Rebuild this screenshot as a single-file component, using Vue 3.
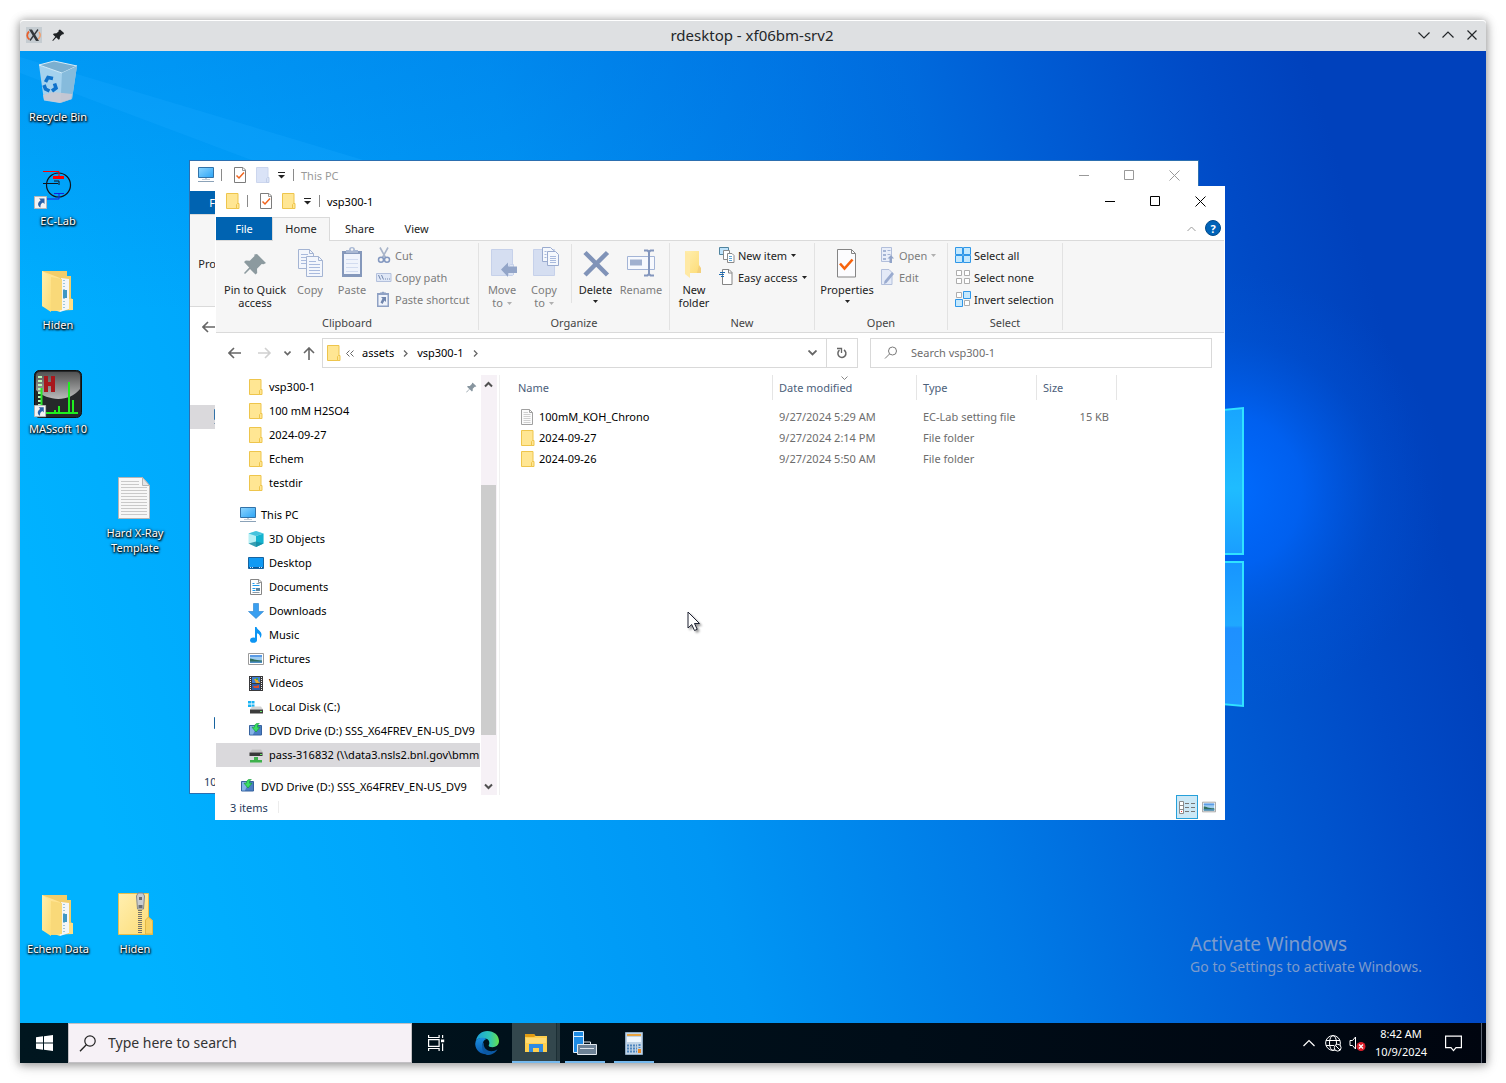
<script setup>
import { ref } from 'vue'

const query = ref('')
const taskQuery = ref('')

const shortcuts = [
  { label: 'Recycle Bin', icon: 'bin', col: 1, row: 1 },
  { label: 'EC-Lab', icon: 'eclab', col: 1, row: 2 },
  { label: 'Hiden', icon: 'folder-open', col: 1, row: 3 },
  { label: 'MASsoft 10', icon: 'massoft', col: 1, row: 4 },
  { label: 'Hard X-Ray Template', icon: 'doc-big', col: 2, row: 5 },
  { label: 'Echem Data', icon: 'folder-open', col: 1, row: 9 },
  { label: 'Hiden', icon: 'folder-zip', col: 2, row: 9 },
]

const groups = [
  {
    name: 'Clipboard', cls: 'g-clip',
    big: [
      { label: 'Pin to Quick access', icon: 'pin', cls: 'w74' },
      { label: 'Copy', icon: 'copy', cls: 'w36', off: true },
      { label: 'Paste', icon: 'paste', cls: 'w48', off: true },
    ],
    small: [
      { label: 'Cut', icon: 'cut', off: true },
      { label: 'Copy path', icon: 'copypath', off: true },
      { label: 'Paste shortcut', icon: 'pasteshort', off: true },
    ],
  },
  {
    name: 'Organize', cls: 'g-org',
    big: [
      { label: 'Move to', icon: 'moveto', cls: 'w42', off: true, inlineArrow: true },
      { label: 'Copy to', icon: 'copyto', cls: 'w42', off: true, inlineArrow: true },
      { label: 'Delete', icon: 'delete', cls: 'w48 split', arrow: true },
      { label: 'Rename', icon: 'rename', cls: 'w44', off: true },
    ],
    small: [],
  },
  {
    name: 'New', cls: 'g-new',
    big: [{ label: 'New folder', icon: 'newfolder', cls: 'w44' }],
    small: [
      { label: 'New item', icon: 'newitem', arrow: true },
      { label: 'Easy access', icon: 'easy', arrow: true },
    ],
  },
  {
    name: 'Open', cls: 'g-open',
    big: [{ label: 'Properties', icon: 'props', cls: 'w60', arrow: true }],
    small: [
      { label: 'Open', icon: 'open', off: true, arrow: true },
      { label: 'Edit', icon: 'edit', off: true },
    ],
  },
  {
    name: 'Select', cls: 'g-sel',
    big: [],
    small: [
      { label: 'Select all', icon: 'selall' },
      { label: 'Select none', icon: 'selnone' },
      { label: 'Invert selection', icon: 'selinv' },
    ],
  },
]

const quick = ['vsp300-1', '100 mM H2SO4', '2024-09-27', 'Echem', 'testdir']

const places = [
  { label: '3D Objects', icon: 'cube' },
  { label: 'Desktop', icon: 'desk' },
  { label: 'Documents', icon: 'docs' },
  { label: 'Downloads', icon: 'down' },
  { label: 'Music', icon: 'music' },
  { label: 'Pictures', icon: 'pics' },
  { label: 'Videos', icon: 'video' },
  { label: 'Local Disk (C:)', icon: 'disk' },
  { label: 'DVD Drive (D:) SSS_X64FREV_EN-US_DV9', icon: 'dvd' },
  { label: 'pass-316832 (\\\\data3.nsls2.bnl.gov\\bmm', icon: 'net', selected: true },
]

const files = [
  { name: '100mM_KOH_Chrono', date: '9/27/2024 5:29 AM', type: 'EC-Lab setting file', size: '15 KB', icon: 'doc' },
  { name: '2024-09-27', date: '9/27/2024 2:14 PM', type: 'File folder', size: '', icon: 'folder' },
  { name: '2024-09-26', date: '9/27/2024 5:50 AM', type: 'File folder', size: '', icon: 'folder' },
]
</script>

<template>
  <svg class="sprite" aria-hidden="true">
    <defs>
      <linearGradient id="gFolder" x1="0" y1="0" x2="1" y2="1">
        <stop offset="0" stop-color="#ffefb0" /><stop offset="1" stop-color="#fddc76" />
      </linearGradient>
      <linearGradient id="gScreen" x1="0" y1="0" x2="1" y2="1">
        <stop offset="0" stop-color="#8fd6ff" /><stop offset="1" stop-color="#2ba4f5" />
      </linearGradient>
      <linearGradient id="gEdge" x1="0" y1="0" x2="1" y2="0">
        <stop offset="0" stop-color="#1aa0dd" /><stop offset=".6" stop-color="#2fc6b4" /><stop offset="1" stop-color="#66e04c" />
      </linearGradient>
      <linearGradient id="gEdge2" x1="0" y1="0" x2="0" y2="1">
        <stop offset="0" stop-color="#1a8fe0" /><stop offset="1" stop-color="#0a58ad" />
      </linearGradient>
      <linearGradient id="gMas" x1="0" y1="0" x2="0" y2="1">
        <stop offset="0" stop-color="#5c5c5c" /><stop offset="1" stop-color="#dedede" />
      </linearGradient>

      <symbol id="folder" viewBox="0 0 16 16">
        <path d="M1.500.5h11.500v15H1.500z" fill="#ffe693" stroke="#eec54c" />
        <path d="M11.500 15.500v-4l1-1h1.500v5z" fill="#ffe693" stroke="#eec54c" />
      </symbol>
      <symbol id="folder-dim" viewBox="0 0 16 16">
        <path d="M1.500.5h11.500v15H1.500z" fill="#dae3f7" stroke="#ccd6ee" />
        <path d="M11.500 15.500v-4l1-1h1.500v5z" fill="#dae3f7" stroke="#c3cfe9" />
      </symbol>
      <symbol id="doc" viewBox="0 0 16 16">
        <path d="M1.500.5h8l3 3v12h-11z" fill="#fbfbfb" stroke="#a0a0a0" />
        <path d="M9.500.5v3h3" fill="none" stroke="#a0a0a0" />
        <path d="M3.500 3.500h4.500M3.500 5.500h7M3.500 7.500h7M3.500 9.500h7M3.500 11.500h7M3.500 13.500h7" stroke="#cfcfcf" />
      </symbol>
      <symbol id="check" viewBox="0 0 16 16">
        <path d="M2.500.5h8.500l2.500 2.500v12.500h-11z" fill="#fff" stroke="#7c7c7c" />
        <path d="M10.500.5v3h3" fill="none" stroke="#9a9a9a" />
        <path d="M4.500 8.500l2.500 2.500 5-5.500" fill="none" stroke="#f0641e" stroke-width="1.500" />
      </symbol>
      <symbol id="pc" viewBox="0 0 16 16">
        <path d="M.5.500h15v10H.5z" fill="url(#gScreen)" stroke="#3272a8" />
        <path d="M7 11h2v1H7z" fill="#c5ced6" /><path d="M4 12.500h8" stroke="#c5ced6" />
        <path d="M0 14.500h16" stroke="#8ba2b8" />
      </symbol>
      <symbol id="cube" viewBox="0 0 16 16">
        <path d="M8 0l7.500 2.500v10L8 16 .5 12.500v-10z" fill="#b7f0f5" />
        <path d="M8 5l7.500-2.500v10L8 16z" fill="#14b3cf" /><path d="M.5 2.500L8 0l7.500 2.500L8 5z" fill="#45c3dd" />
        <path d="M.5 12.500L8 10.500l7.500 2L8 16z" fill="#168aa1" opacity=".8" />
      </symbol>
      <symbol id="desk" viewBox="0 0 16 16">
        <path d="M.5 2.500h15v11H.5z" fill="#0f9af4" stroke="#17639f" />
        <path d="M1 13V12h14v1z" fill="#0c5796" /><path d="M2 12.500h3M11 12.500h3" stroke="#cfe8ff" stroke-dasharray="1 1" />
      </symbol>
      <symbol id="docs" viewBox="0 0 16 16">
        <path d="M2.500.5h8.500l2.500 2.500v12.500h-11z" fill="#fff" stroke="#868686" />
        <path d="M4.500 6.500h7M4.500 4.500h2M4.500 9.500h3M4.500 11.500h3" stroke="#1d9bef" />
        <path d="M8.500 4.500h3M4.500 13.500h7" stroke="#8a9aa8" /><path d="M8 9h4v3H8z" fill="#5d86a0" />
        <path d="M10.500.5v3h3" fill="none" stroke="#999" />
      </symbol>
      <symbol id="down" viewBox="0 0 16 16">
        <path d="M5.500.5h5v8h5L8 15.500.5 8.500h5z" fill="#3a9ff0" stroke="#2380cf" stroke-width=".6" />
      </symbol>
      <symbol id="music" viewBox="0 0 16 16">
        <ellipse cx="5.500" cy="13.200" rx="3.400" ry="2.600" fill="#0d95f3" />
        <path d="M7 13V0h1.500c.7 3 5 4 5 7.500 0 1.500-.5 2.500-1.500 3.500.5-3-1.500-4.500-3-4.800V13z" fill="#0d95f3" />
      </symbol>
      <symbol id="pics" viewBox="0 0 16 16">
        <path d="M.5 2.500h15v11H.5z" fill="#fff" stroke="#9b9b9b" />
        <path d="M2 4h12v8H2z" fill="#9fcdf1" /><path d="M2 4h12v2H2z" fill="#5b9be6" /><path d="M2 7.500c3 0 5 2 12 2V12H2z" fill="#2f6f5e" /><path d="M2 10.500h12V12H2z" fill="#4e8fc4" />
      </symbol>
      <symbol id="video" viewBox="0 0 16 16">
        <path d="M1 1h14v15H1z" fill="#39393b" /><path d="M4 2h8v6H4z" fill="#3f7fd3" /><path d="M4 9h8v6H4z" fill="#2c5dab" />
        <path d="M6 4h4v2l2 2H8z" fill="#e7a92c" /><path d="M5 11h3l3-1v3H6z" fill="#d94f2b" /><path d="M8 3h2v2H8z" fill="#52a33b" />
        <path d="M2.500 2v14M13.500 2v14" stroke="#f0f0f0" stroke-dasharray="1 1" />
      </symbol>
      <symbol id="disk" viewBox="0 0 16 16">
        <path d="M0 2h3v2.500H0zM3.500 2h3v2.500h-3zM0 5.500h3V8H0zM3.500 5.500h3V8h-3z" fill="#18b3f3" />
        <path d="M4 7.500h9l2 3H2z" fill="#d3d3d3" /><path d="M2 10.500h13v4H2z" fill="#3c3c3c" /><path d="M12 12.500h2" stroke="#66ea66" />
      </symbol>
      <symbol id="dvd" viewBox="0 0 16 16">
        <path d="M1.500 2.500h12v9.500h-12z" fill="#4b7ec4" stroke="#37639f" /><path d="M2 3h7l-4 8.500H2z" fill="#86b3e6" />
        <path d="M11.500 0c-4 .3-5 1.800-5 4.200H4L8 9l4-4.800H9.500C9.500 2.200 10 1 11.500 0z" fill="#3adf63" stroke="#159a3a" stroke-width=".7" />
      </symbol>
      <symbol id="net" viewBox="0 0 16 16">
        <path d="M4 2.500h9l2 3H2z" fill="#c3c3c3" /><path d="M1.500 5.500h13v3.500h-13z" fill="#383838" /><path d="M12 7.500h2" stroke="#66ea66" />
        <path d="M6 10h4v3h4v2.500H2V13h4z" fill="#3fb14c" />
      </symbol>
      <symbol id="pin16" viewBox="0 0 16 16">
        <path d="M9.500 2l4.500 4.500-1 .7-1-.2-2.500 2.500v2.500l-1 1-2.800-2.800L2 14l-.5-.5 3.800-3.700L2.500 7l1-1H6l2.700-2.500-.2-1z" fill="#87959f" />
      </symbol>

      <symbol id="pin" viewBox="0 0 32 32">
        <path d="M19 6l9 9-2.500 1.200-1.800-.2-4.700 4.700.2 4.300-1.700 1.500-5.500-5.500L7 26l-1-1 5.200-5.500L6 14l1.800-1.500 4 .3 4.700-4.700-.2-1.600z" transform="translate(-1 1)" fill="#8c9a9f" />
      </symbol>
      <symbol id="copy" viewBox="0 0 32 32">
        <g fill="#f3f6fc" stroke="#a4b4d3"><path d="M4.500 2.500h11l4 4v15h-15z" /><path d="M12.500 9.500h12l4 4v16h-16z" /></g>
        <path d="M15.500 2.500v4h4M24.500 9.500v4h4" fill="none" stroke="#a4b4d3" />
        <path d="M7 7.500h7M7 10.500h5M7 13.500h5M7 16.500h5M15 14.500h7M15 17.500h11M15 20.500h11M15 23.500h11M15 26.500h11" stroke="#a9badd" />
      </symbol>
      <symbol id="paste" viewBox="0 0 32 32">
        <path d="M6 4h20v26H6z" fill="#8598bb" /><path d="M8 7h16v20H8z" fill="#f0f4fc" />
        <path d="M10 6h12V3h-3a3 3 0 0 0-6 0h-3z" fill="#a9b8d3" /><circle cx="16" cy="2.500" r="1.200" fill="#f7f7f7" />
        <path d="M10 12.500h12M10 16.500h12M10 20.500h12M10 24.500h12" stroke="#d2dcf0" />
      </symbol>
      <symbol id="moveto" viewBox="0 0 32 32">
        <path d="M5.500 2.500h21v26h-21z" fill="#d5def1" stroke="#c6d1ea" /><path d="M22.500 28v-9l2-1.500h3V28" fill="#dde5f4" stroke="#c6d1ea" />
        <path d="M15 22.500l7-7v4h9v6.500h-9v4z" fill="#93a5c8" />
      </symbol>
      <symbol id="copyto" viewBox="0 0 32 32">
        <path d="M5.500 2.500h21v26h-21z" fill="#d5def1" stroke="#c6d1ea" />
        <g fill="#f5f8fd" stroke="#9aabcf"><path d="M14.500.5h8l3 3v11h-11z" /><path d="M19.500 4.500h8l3 3v11h-11z" /></g>
        <path d="M22 9.500h6M22 11.500h6M22 13.500h6M22 15.500h6M16.500 4.500h2M16.500 7.500h2M16.500 10.500h2" stroke="#a9badd" />
      </symbol>
      <symbol id="delete" viewBox="0 0 32 32">
        <path d="M5 5.500l22.500 22.500M27.500 5.500l-22.500 22.500" stroke="#8093b8" stroke-width="4.500" fill="none" />
      </symbol>
      <symbol id="rename" viewBox="0 0 32 32">
        <path d="M2.500 9.500h27v13h-27z" fill="#f7f9fe" stroke="#a3b4d6" /><path d="M5 12.500h12v6H5z" fill="#a0b0cf" />
        <path d="M19 3.500h3.500l1.500 1.500 1.500-1.500H29M24 5v22M19 28.500h3.500l1.500-1.500 1.500 1.500H29" stroke="#8396bd" stroke-width="2" fill="none" />
      </symbol>
      <symbol id="newfolder" viewBox="0 0 32 32">
        <path d="M7 4h14v16l2 2v4H10z" fill="url(#gFolder)" /><path d="M7 4l5 4v23l-5-4z" fill="#ffe9a4" /><path d="M21 18l2 3v5h-4z" fill="#f3d07c" />
      </symbol>
      <symbol id="props" viewBox="0 0 32 32">
        <path d="M6.500 2.500h14l4 4v23.500h-18z" fill="#fcfcfe" stroke="#858585" /><path d="M20.500 2.500v4h4" fill="none" stroke="#858585" />
        <path d="M9 16.500l4.500 5 8-9" fill="none" stroke="#f7630c" stroke-width="2.600" />
      </symbol>

      <symbol id="cut" viewBox="0 0 16 16">
        <path d="M4 .5l5.500 10M12 .5L6.500 10.500" stroke="#a8b4c9" stroke-width="1.600" />
        <circle cx="5" cy="12.700" r="2.500" fill="none" stroke="#8398c0" stroke-width="1.500" /><circle cx="11" cy="12.700" r="2.500" fill="none" stroke="#8398c0" stroke-width="1.500" />
      </symbol>
      <symbol id="copypath" viewBox="0 0 16 16">
        <path d="M.5 4.500h14.500v8H.5z" fill="#dfe7f6" stroke="#b3c0dc" /><path d="M2.500 6l2 4.500M5.500 6l2 4.500" stroke="#7186ad" /><path d="M9 10h5" stroke="#7186ad" stroke-dasharray="1 1" />
      </symbol>
      <symbol id="pasteshort" viewBox="0 0 16 16">
        <path d="M1 2h12v14H1z" fill="#8fa1c4" /><path d="M2.500 4h9v10.500h-9z" fill="#eff3fb" /><path d="M4 3h6V1.500H8.500L7 .5 5.500 1.500H4z" fill="#8fa1c4" />
        <path d="M5 6h5v5L8.500 9.500 6.500 13l-2-1.500 2-4z" fill="#7186ad" />
      </symbol>
      <symbol id="newitem" viewBox="0 0 16 16">
        <path d="M.5.500h9v7h-9z" fill="#bfe3fb" stroke="#50849f" /><path d="M4.500 3.500h6v9h-6z" fill="#fff" stroke="#8a8a8a" /><path d="M8.500 6.500h4.500l2 2v7H8.500z" fill="#fff" stroke="#8a8a8a" />
        <path d="M10 9.500h3M10 11.500h3M10 13.500h3" stroke="#5fa7d9" />
      </symbol>
      <symbol id="easy" viewBox="0 0 16 16">
        <path d="M3.500.5h6.500l3 3v12H3.500z" fill="#fff" stroke="#858585" /><path d="M9.500.5v3.500H13" fill="none" stroke="#858585" />
        <path d="M1 3.500h5M0 5.500h5M2 7.500h3" stroke="#1f6db3" />
      </symbol>
      <symbol id="open" viewBox="0 0 16 16">
        <path d="M1.500.5h10v14h-10z" fill="#e9eef9" stroke="#b2bfdb" /><path d="M3 3h3v2H3zM3 7h3v2H3zM3 11h3v2H3z" fill="#a5b5d5" /><path d="M7.500 3.500h3M7.500 7.500h3" stroke="#a5b5d5" />
        <path d="M11 8l3 3.500h-2V16h-2.500v-4.500h-2z" fill="#92a4c8" />
      </symbol>
      <symbol id="edit" viewBox="0 0 16 16">
        <path d="M1.500.5h7.500l3 3v12H1.500z" fill="#e4eaf7" stroke="#b2bfdb" /><path d="M12 3l2 2-7.500 9-2.500 1 .5-3z" fill="#9aabcf" />
      </symbol>
      <symbol id="selall" viewBox="0 0 16 16">
        <path d="M1 1h14v14H1z" fill="#c4e8fd" /><path d="M.5.500h7v7h-7zM8.500.5h7v7h-7zM.5 8.500h7v7h-7zM8.500 8.500h7v7h-7z" fill="none" stroke="#2f97e8" />
      </symbol>
      <symbol id="selnone" viewBox="0 0 16 16">
        <path d="M1.500 1.500h5v5h-5zM9.500 1.500h5v5h-5zM1.500 9.500h5v5h-5zM9.500 9.500h5v5h-5z" fill="#fff" stroke="#adadad" />
      </symbol>
      <symbol id="selinv" viewBox="0 0 16 16">
        <path d="M1.500 1.500h5v5h-5zM9.500 9.500h5v5h-5z" fill="#fff" stroke="#adadad" /><path d="M8.500.5h7v7h-7zM.5 8.500h7v7h-7z" fill="#c4e8fd" stroke="#2f97e8" />
      </symbol>

      <symbol id="shortcut" viewBox="0 0 14 14">
        <path d="M.5.500h12v12H.5z" fill="#f4f4f4" stroke="#b8b8b8" /><path d="M5 2.500h5.500V8L9 6.500C6.500 8 6.500 9 6.500 11.500c-3-1.500-3.500-5 .2-7.300z" fill="#2a62a8" />
      </symbol>
      <symbol id="bin" viewBox="0 0 48 48">
        <path d="M5 7l5 35.500L26 45l12-4 5-33-15 7z" fill="#a5d2ee" />
        <path d="M5 7L20 3l23 5-15 7z" fill="#7bafd0" stroke="#d6ecf8" /><path d="M28 15l15-7-5 33-11.500 4z" fill="#86bbdc" />
        <path d="M9 37l10-3 19 2-.7 5L26 44.700 10 42z" fill="#cbc9d2" opacity=".9" />
        <g fill="none" stroke="#0f72cb" stroke-width="3.600"><path d="M11.500 24l2.500-4.500 5 1" /><path d="M20.500 25.500l1.500 4.500-4 3" /><path d="M15.500 33l-4-2-1.500-4" /></g>
      </symbol>
      <symbol id="eclab" viewBox="0 0 48 48">
        <circle cx="24.500" cy="23" r="12" fill="none" stroke="#10141c" stroke-width="1.200" />
        <path d="M9 9.500h16v5" stroke="#f00" fill="none" /><path d="M19 14h11v3H19z" fill="#f00" />
        <path d="M9 21.500h15M20 19h5v4" stroke="#10141c" fill="none" /><path d="M20 31.500h10M25 31.500v5.500H13" stroke="#1523e0" fill="none" />
        <use href="#shortcut" x="0" y="34" width="14" height="14" />
      </symbol>
      <symbol id="folder-open" viewBox="0 0 48 48">
        <path d="M8 5h25v5h4v22l2 2v10l-20 1L8 40z" fill="#f2cd69" /><path d="M27 12l8 1v30l-9 3z" fill="#f3f6f8" />
        <path d="M30 14v30" stroke="#9fc6da" stroke-width="2" stroke-dasharray="1 2" /><path d="M29 24h4v8h-4z" fill="#3f97c3" />
        <path d="M8 5l18 7v34l-9-3-9-5z" fill="#ffe391" /><path d="M8 5l9 6v35l-9-6z" fill="url(#gFolder)" /><path d="M17 11l11 2v31l-11 1z" fill="#f9d979" /><path d="M35 33h4v11h-4z" fill="#ffdf84" />
      </symbol>
      <symbol id="folder-zip" viewBox="0 0 48 48">
        <path d="M7.500 3.500h30v24l4 3v14H7.500z" fill="url(#gFolder)" stroke="#e6bd4e" /><path d="M34.500 44V30l3-3 4 4v13z" fill="#f7d266" stroke="#e3b845" />
        <path d="M29 18v26" stroke="#74726c" stroke-width="4" stroke-dasharray="1 1" /><path d="M27 3h5l1.500 3-1 13h-6l-1-13z" fill="#c9ccd0" stroke="#85888c" /><path d="M28 7h3v3h-3zM27.500 15h4v3h-4z" fill="#6b6e72" />
      </symbol>
      <symbol id="doc-big" viewBox="0 0 48 48">
        <path d="M7.500 3.500h24l7 8v33h-31z" fill="#f7f7f7" stroke="#b5b5b5" /><path d="M31.500 3.500v8h7z" fill="#e4e4e4" stroke="#b5b5b5" />
        <path d="M10 7.500h18M10 10.500h18M10 13.500h26M10 16.500h26M10 19.500h26M10 22.500h26M10 25.500h26M10 28.500h26M10 31.500h26M10 34.500h26M10 37.500h26M10 40.500h26" stroke="#c9c9c9" />
      </symbol>
      <symbol id="massoft" viewBox="0 0 48 48">
        <rect x=".5" y=".5" width="47" height="47" rx="5" fill="#26282a" stroke="#101010" />
        <path d="M2 6a4 4 0 0 1 4-4h36a4 4 0 0 1 4 4v13C36 32 14 32 2 20z" fill="url(#gMas)" opacity=".8" />
        <path d="M10 6h4v6h3V6h4v16h-4v-6h-3v6h-4z" fill="#a8171c" />
        <path d="M6 6v30" stroke="#b6f7b6" stroke-width="4" stroke-dasharray="2 2" /><path d="M7.500 18v18" stroke="#2ae62a" stroke-width="2" />
        <path d="M12 43h32M21 43v-3M25 43v-7M35 43V12M39 43V30" stroke="#1fee1f" stroke-width="2" fill="none" />
        <use href="#shortcut" x="0" y="35" width="13" height="13" />
      </symbol>
    </defs>
  </svg>

  <div class="page">
    <section class="frame">
      <header class="frame-bar">
        <div class="frame-left">
          <svg width="16" height="16" viewBox="0 0 16 16">
            <path d="M0 0h16v16H0z" fill="#c5ccd1" /><path d="M3 4.500C.5 7 .5 10.500 3.500 12.500" fill="none" stroke="#e8602c" stroke-width="1.800" /><path d="M13 5c2 2.500 1.500 5.500-1 7" fill="none" stroke="#f0a070" stroke-width="1.500" />
            <path d="M3 2.500h3l7 11.500h-3z" fill="#33373b" /><path d="M12 2.500L4 13.500" stroke="#33373b" stroke-width="1.300" />
          </svg>
          <svg width="16" height="16" viewBox="0 0 16 16">
            <path d="M10 2.500l4 3.500-.5 1.200-1.500.2-2 2.100-.3 2.500-1 .8-2.400-2.300L3 14l-.7-.6 3-3.600L3 7.500l.8-1.100 2.700-.2L8.600 4.500V3.200z" fill="#1e2124" />
          </svg>
        </div>
        <h1>rdesktop - xf06bm-srv2</h1>
        <div class="frame-btns">
          <button aria-label="Minimize"><svg width="12" height="12" viewBox="0 0 12 12"><path d="M.5 3.500L6 9l5.500-5.500" /></svg></button>
          <button aria-label="Maximize"><svg width="12" height="12" viewBox="0 0 12 12"><path d="M.5 8.500L6 3l5.500 5.500" /></svg></button>
          <button aria-label="Close"><svg width="12" height="12" viewBox="0 0 12 12"><path d="M1.500 1.500l9 9M10.500 1.500l-9 9" /></svg></button>
        </div>
      </header>

      <main class="desktop">
        <svg class="wall" viewBox="0 0 1466 972" preserveAspectRatio="xMidYMid slice" aria-hidden="true">
          <defs>
            <linearGradient id="wBase" gradientUnits="userSpaceOnUse" x1="60" y1="700" x2="1380" y2="330">
              <stop offset="0" stop-color="#00b2ff" /><stop offset=".2" stop-color="#00a6fc" /><stop offset=".42" stop-color="#0096f4" />
              <stop offset=".62" stop-color="#007ae6" /><stop offset=".8" stop-color="#005cd4" /><stop offset=".92" stop-color="#004ac6" /><stop offset="1" stop-color="#0041bc" />
            </linearGradient>
            <radialGradient id="wGlow" gradientUnits="userSpaceOnUse" cx="1205" cy="440" r="220">
              <stop offset="0" stop-color="#006cff" /><stop offset=".35" stop-color="#0066fc" stop-opacity=".75" /><stop offset=".7" stop-color="#005ce8" stop-opacity=".2" /><stop offset="1" stop-color="#0058e0" stop-opacity="0" />
            </radialGradient>
            <linearGradient id="wTop" x1="0" y1="0" x2="0" y2="1">
              <stop offset="0" stop-color="#006ee0" stop-opacity=".3" /><stop offset="1" stop-color="#006ee0" stop-opacity="0" />
            </linearGradient>
            <linearGradient id="wPane" x1="0" y1="0" x2="0" y2="1">
              <stop offset="0" stop-color="#18a5ff" /><stop offset=".55" stop-color="#1fbcff" /><stop offset="1" stop-color="#1a9eff" />
            </linearGradient>
            <linearGradient id="wPane2" x1="0" y1="0" x2="0" y2="1">
              <stop offset="0" stop-color="#1795ff" /><stop offset=".44" stop-color="#1fa8ff" /><stop offset=".46" stop-color="#1e90ff" /><stop offset="1" stop-color="#2098ff" />
            </linearGradient>
          </defs>
          <path d="M0 0h1466v972H0z" fill="url(#wBase)" />
          <path d="M0 0h900v260H0z" fill="url(#wTop)" />
          <path d="M0 6L480 150H340L0 22z" fill="#18a8ff" opacity=".3" />
          <circle cx="1205" cy="440" r="220" fill="url(#wGlow)" />
          <g stroke="#30e2ff" stroke-width="2">
            <path d="M1090 370l133-13v146h-133z" fill="url(#wPane)" /><path d="M1090 511h133v144l-133-12z" fill="url(#wPane2)" />
          </g>
        </svg>

        <nav class="shortcuts" aria-label="Desktop">
          <a v-for="s in shortcuts" :key="s.label + s.row" href="#" :style="{ gridColumn: s.col, gridRow: s.row }">
            <svg width="48" height="48"><use :href="'#' + s.icon" /></svg>
            <span>{{ s.label }}</span>
          </a>
        </nav>

        <div class="watermark"><p>Activate Windows</p><p>Go to Settings to activate Windows.</p></div>

        <section class="win back">
          <header class="titlebar">
            <svg class="i16 lead" width="16" height="16"><use href="#pc" /></svg><i class="bar"></i>
            <svg class="i16 g1" width="16" height="16"><use href="#check" /></svg>
            <svg class="i16 g2" width="16" height="16"><use href="#folder-dim" /></svg>
            <svg class="qa" width="7" height="8" viewBox="0 0 7 8"><path d="M0 1.500h7" stroke="#222" /><path d="M0 4h7L3.500 7.500z" fill="#222" /></svg>
            <i class="bar"></i><h2>This PC</h2>
            <div class="winbtns">
              <button aria-label="Minimize"><svg width="11" height="11" viewBox="0 0 11 11"><path d="M0 5.500h10" /></svg></button>
              <button aria-label="Maximize"><svg width="11" height="11" viewBox="0 0 11 11"><path d="M.5.500h9v9h-9z" /></svg></button>
              <button aria-label="Close"><svg width="11" height="11" viewBox="0 0 11 11"><path d="M.5.500l10 10M10.500.5l-10 10" /></svg></button>
            </div>
          </header>
          <div class="tabs"><button class="file">File</button></div>
          <div class="ribbon">
            <div class="group g-back"><div class="gbody">
              <button class="big w60"><svg width="32" height="32"><use href="#props" /></svg><span>Properties</span></button>
            </div></div>
          </div>
          <div class="addr"><button class="nav" aria-label="Back"><svg width="14" height="12" viewBox="0 0 14 12"><path d="M13.500 6H1M6 1L1 6l5 5" /></svg></button></div>
          <div class="back-body">
            <div class="back-row selected"><svg width="16" height="16"><use href="#pc" /></svg></div>
            <div class="back-row"><svg width="16" height="16"><use href="#desk" /></svg></div>
          </div>
          <footer class="status"><span>10 items</span></footer>
        </section>

        <section class="win front">
          <header class="titlebar">
            <svg class="i16 lead" width="16" height="16"><use href="#folder" /></svg><i class="bar"></i>
            <svg class="i16 g1" width="16" height="16"><use href="#check" /></svg>
            <svg class="i16 g2" width="16" height="16"><use href="#folder" /></svg>
            <svg class="qa" width="7" height="8" viewBox="0 0 7 8"><path d="M0 1.500h7" stroke="#222" /><path d="M0 4h7L3.500 7.500z" fill="#222" /></svg>
            <i class="bar"></i><h2>vsp300-1</h2>
            <div class="winbtns">
              <button aria-label="Minimize"><svg width="11" height="11" viewBox="0 0 11 11"><path d="M0 5.500h10" /></svg></button>
              <button aria-label="Maximize"><svg width="11" height="11" viewBox="0 0 11 11"><path d="M.5.500h9v9h-9z" /></svg></button>
              <button aria-label="Close"><svg width="11" height="11" viewBox="0 0 11 11"><path d="M.5.500l10 10M10.500.5l-10 10" /></svg></button>
            </div>
          </header>

          <div class="tabs">
            <button class="file">File</button><button class="tab on">Home</button><button class="tab">Share</button><button class="tab">View</button>
            <button class="fold" aria-label="Collapse ribbon"><svg width="9" height="6" viewBox="0 0 9 6"><path d="M.5 5L4.500 1l4 4" fill="none" stroke="#9a9a9a" /></svg></button>
            <button class="help" aria-label="Help">?</button>
          </div>

          <div class="ribbon">
            <div v-for="g in groups" :key="g.name" class="group" :class="g.cls">
              <div class="gbody">
                <button v-for="b in g.big" :key="b.label" class="big" :class="[b.cls, { off: b.off }]">
                  <svg width="32" height="32"><use :href="'#' + b.icon" /></svg>
                  <span>{{ b.label }}<svg v-if="b.inlineArrow" class="tri in" width="5" height="3" viewBox="0 0 5 3"><path d="M0 0h5L2.500 3z" /></svg></span>
                  <svg v-if="b.arrow" class="tri under" width="5" height="3" viewBox="0 0 5 3"><path d="M0 0h5L2.500 3z" /></svg>
                </button>
                <div v-if="g.small.length" class="smalls">
                  <button v-for="b in g.small" :key="b.label" class="small" :class="{ off: b.off }">
                    <svg width="16" height="16"><use :href="'#' + b.icon" /></svg><span>{{ b.label }}</span>
                    <svg v-if="b.arrow" class="tri" width="5" height="3" viewBox="0 0 5 3"><path d="M0 0h5L2.500 3z" /></svg>
                  </button>
                </div>
              </div>
              <div class="gname">{{ g.name }}</div>
            </div>
          </div>

          <div class="addr">
            <button class="nav" aria-label="Back"><svg width="14" height="12" viewBox="0 0 14 12"><path d="M13 6H1M6 1L1 6l5 5" /></svg></button>
            <button class="nav dim" aria-label="Forward"><svg width="14" height="12" viewBox="0 0 14 12"><path d="M0 6h12M7 1l5 5-5 5" /></svg></button>
            <button class="nav slim" aria-label="Recent"><svg width="7" height="5" viewBox="0 0 7 5"><path d="M.5.500l3 3 3-3" /></svg></button>
            <button class="nav" aria-label="Up"><svg width="12" height="13" viewBox="0 0 12 13"><path d="M6 13V1M1 6l5-5 5 5" /></svg></button>
            <div class="crumbs">
              <svg width="16" height="16"><use href="#folder" /></svg>
              <svg class="dbl" width="8" height="7" viewBox="0 0 8 7"><path d="M3.500.5l-3 3 3 3M7.500.5l-3 3 3 3" fill="none" stroke="#666" /></svg>
              <a href="#">assets</a>
              <svg width="5" height="7" viewBox="0 0 5 7"><path d="M1 .5l3 3-3 3" fill="none" stroke="#666" stroke-width="1.300" /></svg>
              <a href="#">vsp300-1</a>
              <svg width="5" height="7" viewBox="0 0 5 7"><path d="M1 .5l3 3-3 3" fill="none" stroke="#666" stroke-width="1.300" /></svg>
              <button class="drop" aria-label="History"><svg width="9" height="6" viewBox="0 0 9 6"><path d="M.5.500l4 4 4-4" fill="none" stroke="#666" stroke-width="1.800" /></svg></button>
              <button class="refresh" aria-label="Refresh"><svg width="12" height="12" viewBox="0 0 12 12"><path d="M8 3a4 4 0 1 1-4.500.2" fill="none" stroke="#666" stroke-width="1.500" /><path d="M1 1.500h4.500V6" fill="none" stroke="#666" stroke-width="1.300" /></svg></button>
            </div>
            <label class="search">
              <svg width="14" height="14" viewBox="0 0 14 14"><circle cx="8.500" cy="5" r="4" fill="none" stroke="#7a7a7a" /><path d="M5.500 8L1 12.500" stroke="#7a7a7a" /></svg>
              <input v-model="query" type="text" placeholder="Search vsp300-1" aria-label="Search vsp300-1" />
            </label>
          </div>

          <div class="content">
            <nav class="tree" aria-label="Folders">
              <a v-for="(q, i) in quick" :key="q" href="#" class="sub"><svg width="16" height="16"><use href="#folder" /></svg><span>{{ q }}</span><svg v-if="i === 0" class="pinned" width="13" height="13"><use href="#pin16" /></svg></a>
              <a href="#" class="top"><svg width="16" height="16"><use href="#pc" /></svg><span>This PC</span></a>
              <a v-for="p in places" :key="p.label" href="#" class="sub" :class="{ selected: p.selected }"><svg width="16" height="16"><use :href="'#' + p.icon" /></svg><span>{{ p.label }}</span></a>
              <a href="#" class="top"><svg width="16" height="16"><use href="#dvd" /></svg><span>DVD Drive (D:) SSS_X64FREV_EN-US_DV9</span></a>
            </nav>
            <div class="scroll">
              <button aria-label="Scroll up"><svg width="9" height="7" viewBox="0 0 9 7"><path d="M1 5.500L4.500 2 8 5.500" fill="none" stroke="#505050" stroke-width="2" /></svg></button>
              <div class="track"><div class="thumb"></div></div>
              <button aria-label="Scroll down"><svg width="9" height="7" viewBox="0 0 9 7"><path d="M1 1.500L4.500 5 8 1.500" fill="none" stroke="#505050" stroke-width="2" /></svg></button>
            </div>
            <div class="list">
              <table>
                <colgroup><col class="c1" /><col class="c2" /><col class="c3" /><col class="c4" /></colgroup>
                <thead><tr><th>Name</th><th>Date modified<svg class="sort" width="7" height="4" viewBox="0 0 7 4"><path d="M.5.500l3 3 3-3" fill="none" stroke="#888" /></svg></th><th>Type</th><th>Size</th></tr></thead>
                <tbody>
                  <tr v-for="f in files" :key="f.name">
                    <td><span class="fname"><svg width="16" height="16"><use :href="'#' + f.icon" /></svg>{{ f.name }}</span></td>
                    <td>{{ f.date }}</td><td>{{ f.type }}</td><td class="num">{{ f.size }}</td>
                  </tr>
                </tbody>
              </table>
            </div>
          </div>

          <footer class="status">
            <span>3 items</span><i></i>
            <button class="on" aria-label="Details view"><svg width="16" height="13" viewBox="0 0 16 13"><path d="M.5.500h4v12h-4zM.5 4.500h4M.5 8.500h4" fill="#fff" stroke="#8b8b8b" /><path d="M6 2.500h4M12 2.500h4M6 6.500h4M12 6.500h4M6 10.500h4M12 10.500h4" stroke="#777" /><path d="M2 10h1v1H2z" fill="#e33" /></svg></button>
            <button aria-label="Icons view"><svg width="14" height="14"><use href="#pics" /></svg></button>
          </footer>
        </section>

        <svg class="cursor" width="14" height="22" viewBox="0 0 14 22"><path d="M1 1v16l3.700-3.500L7.500 19.500l2.700-1.200-2.700-5.800h5z" fill="#fff" stroke="#1c2030" /></svg>
      </main>

      <footer class="taskbar">
        <button class="start" aria-label="Start"><svg width="17" height="16" viewBox="0 0 17 16"><path d="M0 2.300L7 1.300v6.200H0zM8 1.200L17 0v7.500H8zM0 8.500h7v6.200L0 13.700zM8 8.500h9V16l-9-1.200z" fill="#fff" /></svg></button>
        <label class="tsearch">
          <svg width="17" height="17" viewBox="0 0 17 17"><circle cx="11" cy="6" r="5.200" fill="none" stroke="#222" stroke-width="1.200" /><path d="M7.300 9.700L1 16.300" stroke="#222" stroke-width="1.300" /></svg>
          <input v-model="taskQuery" type="text" placeholder="Type here to search" aria-label="Type here to search" />
        </label>
        <button class="app view" aria-label="Task view"><svg width="17" height="16" viewBox="0 0 17 16" fill="none" stroke="#fff" stroke-width="1.200"><path d="M.6 0v2.500h10.500V0M.6 16v-2.500h10.500V16M.6 4.600h10.500v6.800H.6zM14.600 0v3M14.600 8.500V16" /><path d="M13 4.500h3.200v2.700H13z" fill="#fff" stroke="none" /></svg></button>
        <button class="app" aria-label="Edge"><svg width="24" height="24" viewBox="0 0 24 24">
          <path d="M1 9.500C2 4 6.500 0 12.300 0 19 0 24 4.300 24 10c0 4.200-3.200 6.200-6.400 6.200-2.800 0-4.200-1-3.900-2 1.200-1.500.9-4.800-1.700-6.200C8 6 2.800 7 1 9.500z" fill="url(#gEdge)" />
          <path d="M.8 9.800C3 6.500 8.500 6 11.500 8c-3 1-4.500 4-3.500 7.500 1.300 4.500 5.500 6.500 9 6.200C10 25.500.5 22 .2 13z" fill="url(#gEdge2)" />
          <path d="M9 11c-1.500 5.500 3 10 9.500 9 1.500-.3 3-1 4-1.800-2 3.800-6 5.800-10.500 5.800C7 22 5.500 15 9 11z" fill="#0c59a4" /></svg></button>
        <button class="app open active" aria-label="File Explorer"><svg width="22" height="18" viewBox="0 0 22 18"><path d="M0 0h9l1.500 2H22v16H0z" fill="#ffcf4d" /><path d="M0 0h9l1.500 2L9 3H0z" fill="#e29d14" /><path d="M1 4h20v5H1z" fill="#ffdb72" /><path d="M4 10h14v8h-4v-4H8v4H4z" fill="#2f8ae0" /></svg></button>
        <button class="app open" aria-label="Server Manager"><svg width="24" height="24" viewBox="0 0 24 24"><path d="M.5.500h10v21H.5z" fill="#1d8be4" stroke="#dbeeff" /><path d="M.5 5.500h10" stroke="#dbeeff" /><path d="M4.500 13.500h19v10h-19z" fill="#6d8296" stroke="#dfe6ec" /><path d="M10.500 13v-2h7v2M7 17.500h14" fill="none" stroke="#dfe6ec" /></svg></button>
        <button class="app open" aria-label="Calculator"><svg width="18" height="23" viewBox="0 0 18 23"><path d="M.5.500h17v22H.5z" fill="#bfd3e6" stroke="#8fa9c1" /><path d="M2 2h14v2H2z" fill="#e8a33f" /><path d="M2 5h14v5H2z" fill="#eef6fd" /><path d="M2 13.500h10M2 16.500h10M2 19.500h10M14.500 12v4" stroke="#4f86bd" stroke-width="2" stroke-dasharray="2 1" /><path d="M13 17h3v4h-3z" fill="#e98a26" /></svg></button>
        <div class="tray">
          <button aria-label="Show hidden icons"><svg width="12" height="8" viewBox="0 0 12 8"><path d="M.5 7L6 1.500 11.500 7" fill="none" stroke="#fff" stroke-width="1.200" /></svg></button>
          <button aria-label="Network"><svg width="17" height="17" viewBox="0 0 17 17" fill="none" stroke="#fff"><circle cx="8" cy="8" r="7.400" /><ellipse cx="8" cy="8" rx="3.500" ry="7.400" /><path d="M1 5.500h14M1 10.500h8" /><circle cx="12.700" cy="12.700" r="3.400" fill="#020a14" /><path d="M10.500 10.500l4.500 4.500" /></svg></button>
          <button aria-label="Volume"><svg width="17" height="15" viewBox="0 0 17 15"><path d="M1 4.500h2.500L6.500 1v12L3.500 9.500H1z" fill="none" stroke="#fff" /><circle cx="12" cy="10.500" r="4.500" fill="#da1f2b" /><path d="M10 8.500l4 4M14 8.500l-4 4" stroke="#fff" stroke-width="1.300" /></svg></button>
          <time>8:42 AM<br />10/9/2024</time>
          <button class="note" aria-label="Notifications"><svg width="17" height="17" viewBox="0 0 17 17"><path d="M.6 1.100h15.800v11.500H11l-2.500 3-2.500-3H.6z" fill="none" stroke="#fff" stroke-width="1.200" /></svg></button>
          <i></i>
        </div>
      </footer>
    </section>
  </div>
</template>

<style>
html, body { margin: 0; background: #fff; }
</style>

<style scoped>
* { box-sizing: border-box; }
button { border: 0; padding: 0; background: none; font: inherit; color: inherit; display: flex; align-items: center; justify-content: center; }
a { color: inherit; text-decoration: none; }
input { border: 0; padding: 0; background: none; font: inherit; outline: 0; flex: 1; min-width: 0; }
h1, h2, p { margin: 0; font-weight: 400; }
svg { flex: none; display: block; }
.sprite { position: absolute; width: 0; height: 0; }
.page { min-height: 100vh; padding: 20px; display: flex; flex-direction: column; font-family: "Noto Sans", "Open Sans", sans-serif; font-size: 11px; line-height: 15px; color: #000; }
.frame { flex: 1; display: flex; flex-direction: column; border-radius: 4px 4px 0 0; box-shadow: 0 1px 8px 1px rgba(0, 0, 0, .35), 0 3px 16px rgba(0, 0, 0, .12); }
.frame-bar { height: 31px; flex: none; display: grid; grid-template-columns: 1fr auto 1fr; align-items: center; background: #dee0e2; border-top: 1px solid #fff; border-radius: 4px 4px 0 0; padding: 0 8px 2px 6px; }
.frame-left { display: flex; gap: 8px; }
.frame-bar h1 { font-size: 15px; line-height: 20px; color: #232629; }
.frame-btns { display: flex; justify-content: flex-end; gap: 12px; }
.frame-btns path { fill: none; stroke: #232629; stroke-width: 1.2; }

.desktop { position: relative; flex: 1; min-height: 800px; overflow: hidden; background: #0088ec; }
.wall { position: absolute; inset: 0; width: 100%; height: 100%; }
.shortcuts { position: absolute; top: 0; left: 0; display: grid; grid-template-columns: 76px 78px; grid-template-rows: repeat(9, 104px); }
.shortcuts a { padding-top: 7px; display: flex; flex-direction: column; align-items: center; gap: 3px; color: #fff; text-align: center; text-shadow: 0 1px 2px #000, 1px 1px 2px #000, 0 0 3px rgba(0, 0, 0, .7); }
.shortcuts span { max-width: 72px; }
.watermark { position: absolute; right: 64px; bottom: 46px; color: #7c9bcc; }
.watermark p:first-child { font-size: 19px; line-height: 26px; }
.watermark p:last-child { font-size: 14px; line-height: 20px; }

.win { position: absolute; display: flex; flex-direction: column; background: #fff; overflow: hidden; }
.back { left: 169px; top: 109px; width: 1010px; height: 634px; border: 1px solid #2c6fb0; }
.front { left: 195px; top: 135px; width: 1010px; height: 634px; border: 1px solid #fff; }
.titlebar { height: 30px; flex: none; display: flex; align-items: center; padding: 0 1px 2px 9px; }
.back .titlebar { padding-left: 8px; }
.titlebar .bar { width: 1px; height: 12px; margin-left: 6px; background: #8a8a8a; }
.back .titlebar .bar { margin-left: 7px; }
.titlebar .g1 { margin-left: 10px; }
.titlebar .g2 { margin-left: 7px; }
.titlebar .qa { margin-left: 7px; }
.titlebar .qa + .bar { margin-left: 8px; margin-right: 7px; }
.titlebar h2 { font-size: 11px; line-height: 15px; flex: 1; }
.back .titlebar h2 { color: #999; }
.winbtns { display: flex; }
.winbtns button { width: 45px; height: 28px; }
.winbtns path { fill: none; stroke: #000; }
.back .winbtns path { stroke: #999; }

.tabs { height: 23px; flex: none; display: flex; align-items: stretch; }
.file { width: 56px; padding-bottom: 1px; background: #0063b1; color: #fff; }
.tab { padding: 0 14px 1px; color: #222; border: 1px solid transparent; border-bottom: 0; }
.tab.on { width: 58px; height: 24px; padding: 0 0 3px; background: #f6f6f6; border-color: #dadada; z-index: 1; }
.fold { margin-left: auto; width: 16px; }
.help { width: 16px; height: 16px; margin: 3px 3px 0 6px; border-radius: 8px; background: #0063b8; border: 1px solid #004a8c; color: #fff; font-weight: 700; }
.ribbon { height: 93px; flex: none; display: flex; background: #f6f6f6; border-top: 1px solid #dadada; border-bottom: 1px solid #dadada; }
.group { margin: 2px 0; border-right: 1px solid #e2e2e2; display: flex; flex-direction: column; flex: none; }
.gbody { flex: 1; display: flex; padding-top: 1px; }
.gname { height: 14px; line-height: 14px; text-align: center; color: #444; }
.g-clip { width: 263px; }
.g-org { width: 191px; }
.g-new { width: 145px; }
.g-open { width: 133px; }
.g-sel { width: 115px; }
.g-back { width: 70px; }
.g-clip .gbody, .g-org .gbody, .g-new .gbody, .g-open .gbody { padding-left: 2px; }
.g-back .gbody { padding-left: 5px; }
.g-sel .gbody { padding-left: 7px; }
.big { flex-direction: column; justify-content: flex-start; align-self: flex-start; padding-top: 3px; line-height: 13px; color: #222; }
.big > span { margin-top: 4px; }
.w36 { width: 36px; } .w42 { width: 42px; } .w44 { width: 44px; } .w48 { width: 48px; } .w60 { width: 60px; } .w74 { width: 74px; }
.w42 > span { max-width: 34px; }
.split { border-left: 1px solid #e2e2e2; margin-left: 6px; }
.off { color: #7c7c7c; }
.tri { fill: #222; }
.off .tri { fill: #b0b0b0; }
.tri.in { display: inline-block; margin: 0 0 2px 4px; }
.tri.under { margin-top: 4px; }
.small { height: 22px; gap: 3px; color: #222; white-space: nowrap; }
.small .tri { margin-left: 1px; }
.small.off { color: #7c7c7c; }
.smalls { display: flex; flex-direction: column; align-items: flex-start; }
.g-new .smalls, .g-open .smalls { margin-left: 3px; }

.addr { height: 42px; flex: none; display: flex; align-items: center; padding: 0 12px 2px 6px; }
.nav { width: 26px; }
.nav.dim { margin-left: 4px; }
.nav path { fill: none; stroke: #666; stroke-width: 1.600; }
.nav.dim path { stroke: #d0d0d0; }
.nav.slim { width: 18px; }
.crumbs { flex: 1; height: 30px; border: 1px solid #d9d9d9; display: flex; align-items: center; padding-left: 3px; }
.crumbs .dbl { margin: 0 8px 0 4px; }
.crumbs a { margin-right: 9px; padding-bottom: 2px; }
.crumbs a + svg { margin-right: 9px; }
.drop { margin-left: auto; width: 28px; height: 28px; }
.refresh { width: 31px; height: 28px; border-left: 1px solid #d9d9d9; }
.search { flex: 0 1 342px; height: 30px; margin-left: 12px; border: 1px solid #d9d9d9; display: flex; align-items: center; gap: 13px; padding: 0 13px 1px; }
.search input::placeholder { color: #6d6d6d; opacity: 1; }

.content { flex: 1; min-height: 0; display: flex; overflow: hidden; }
.tree { width: 264px; flex: none; overflow: hidden; }
.tree a { height: 24px; display: flex; align-items: center; gap: 5px; white-space: nowrap; }
.tree span { padding-bottom: 2px; }
.tree .sub { padding-left: 32px; }
.tree .top { padding-left: 24px; margin-top: 8px; }
.tree .sub span { flex: 1; }
.tree .selected { background: #dad9dc; }
.tree .pinned { margin-right: 2px; }
.scroll { width: 16px; margin-left: 1px; padding-right: 1px; flex: none; background: #f6f1f6; display: flex; flex-direction: column; }
.scroll button { height: 18px; }
.track { flex: 1; }
.thumb { height: 65%; margin-top: 92px; background: #cdcdcd; }
.list { flex: 1; margin-left: 2px; border-left: 1px solid #f0f0f0; overflow: hidden; }
table { border-collapse: separate; border-spacing: 0; table-layout: fixed; width: 617px; }
.c1 { width: 273px; } .c2 { width: 144px; } .c3 { width: 120px; } .c4 { width: 80px; }
th { position: relative; height: 25px; padding: 0 0 0 6px; text-align: left; font-weight: 400; color: #4c607a; border-right: 1px solid #e5e5e5; }
th:first-child { padding-left: 18px; }
.sort { position: absolute; top: 1px; left: calc(50% - 4px); }
td { height: 21px; padding: 0 0 0 6px; color: #6d6d6d; white-space: nowrap; }
tbody::before { content: ""; display: block; height: 6px; }
td:first-child { padding-left: 20px; color: #000; }
td.num { text-align: right; padding-right: 8px; }
.fname { display: flex; align-items: center; gap: 3px; }
.status { height: 24px; flex: none; display: flex; align-items: center; padding: 0 4px 0 14px; color: #1e395b; }
.status i { width: 1px; height: 12px; margin-left: 10px; margin-right: auto; background: #ececec; }
.status button { width: 22px; height: 24px; }
.status .on { background: #cce8f6; border: 1px solid #26a0da; }
.back-body { flex: 1; padding-top: 56px; display: flex; flex-direction: column; gap: 282px; }
.back-row { width: 264px; height: 24px; padding-left: 24px; display: flex; align-items: center; }
.back-row.selected { background: #dad9dc; }
.cursor { position: absolute; left: 667px; top: 560px; filter: drop-shadow(2px 2px 1px rgba(0, 0, 0, .4)); }

.taskbar { height: 40px; flex: none; display: flex; background: linear-gradient(90deg, #00161f, #000d18 60%, #00050f); color: #fff; }
.start { width: 48px; }
.tsearch { width: 344px; display: flex; align-items: center; gap: 12px; padding: 0 10px; background: #f6f1f6; border: 1px solid #c2c0c4; font-size: 14px; line-height: 20px; }
.tsearch input::placeholder { color: #333; opacity: 1; }
.app { width: 48px; margin-right: 1px; position: relative; }
.app.view { margin-right: 3px; }
.app.open::after { content: ""; position: absolute; left: 4px; right: 4px; bottom: 0; height: 2px; background: #76b9ed; }
.app.active { background: linear-gradient(90deg, #33474d 44px, #1c2f35 44px, #1c2f35 45px, #2b3d43 45px); }
.app.active::after { left: 0; right: 0; }
.tray { margin-left: auto; display: flex; align-items: center; }
.tray button { width: 24px; }
.tray time { width: 64px; text-align: center; line-height: 18px; }
.tray .note { width: 40px; }
.tray i { width: 1px; height: 40px; margin: 0 4px 0 8px; background: #5a6270; }
</style>
